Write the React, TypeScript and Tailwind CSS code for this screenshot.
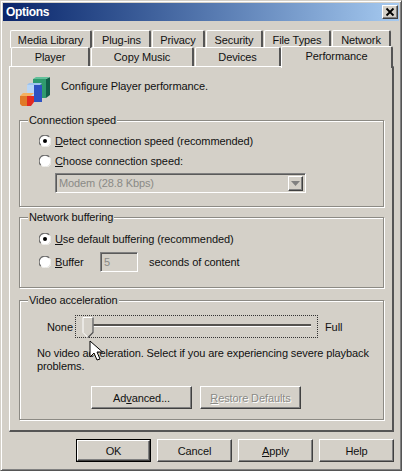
const raised = "border border-t-white border-l-white border-r-[#404040] border-b-[#404040] shadow-[inset_-1px_-1px_0_#808080]"
const sunken = "border border-t-[#808080] border-l-[#808080] border-r-white border-b-white shadow-[inset_1px_1px_0_#5a5a5a]"

function BackTab({ label, width }: { label: string; width: string }) {
  return (
    <div className={`${width} h-[18px] shrink-0 flex items-center justify-center rounded-t-[2px] border-t border-l border-white border-r-2 border-r-[#555] pt-px`}>
      {label}
    </div>
  )
}

function Radio({ checked }: { checked?: boolean }) {
  return (
    <svg width="12" height="12" viewBox="0 0 12 12" className="shrink-0">
      <circle cx="6" cy="6" r="5.5" fill="#fff" />
      <path d="M1.8 10.2A5.8 5.8 0 0 1 10.2 1.8" fill="none" stroke="#6e6e6e" strokeWidth="1.2" />
      <path d="M10.5 2.5A5.6 5.6 0 0 1 2.5 10.5" fill="none" stroke="#f4f4f2" strokeWidth="1" />
      {checked && <circle cx="6" cy="6" r="2" fill="#000" />}
    </svg>
  )
}

function GroupBox({ title, className, children }: { title: string; className: string; children: React.ReactNode }) {
  return (
    <div className={`relative border border-[#8c8a84] shadow-[1px_1px_0_#fff,inset_1px_1px_0_#fff] ${className}`}>
      <span className="absolute left-[8px] -top-[9px] bg-[#d4d0c8] px-[1px] leading-[16px]">{title}</span>
      {children}
    </div>
  )
}

function Button({ className, children }: { className: string; children: React.ReactNode }) {
  return <div className={`${raised} h-[23px] flex items-center justify-center ${className}`}>{children}</div>
}

function PlayerIcon() {
  return (
    <svg width="32" height="34" viewBox="0 0 32 34" className="shrink-0">
      <path d="M14 3h13v19H14z" fill="#2f9a6e" />
      <path d="M27 3l4-2v18l-4 3z" fill="#125f4a" />
      <path d="M14 3l3-2h14l-4 2z" fill="#62c09a" />
      <path d="M8 9h7v15H8z" fill="#b9d6f6" />
      <path d="M8 9l2-2h13l-2 2z" fill="#9fc4ee" />
      <path d="M15 9h8v17h-8z" fill="#2e52c2" />
      <path d="M1 20l3-3h11l-3 3z" fill="#f5b060" />
      <path d="M1 20h7v10H3l-2-2z" fill="#e07a28" />
      <path d="M8 20h7v6l-3 4H8z" fill="#e22a22" />
    </svg>
  )
}

export default function App() {
  return (
    <div className="w-[402px] h-[471px] overflow-hidden bg-[#d4d0c8] p-[2px] border border-t-[#d4d0c8] border-l-[#d4d0c8] border-r-[#555] border-b-[#555] shadow-[inset_1px_1px_0_#fff,inset_-1px_-1px_0_#808080] text-[11px] tracking-[-0.1px] leading-[14px] text-[#111] font-['Liberation_Sans',Arial,sans-serif]">
      <div className="h-[18px] flex items-center justify-between pl-[3px] pr-[1px] bg-gradient-to-r from-[#0a246a] to-[#a6caf0]">
        <span className="font-bold text-white text-[12px] tracking-[-0.3px]">Options</span>
        <div className={`${raised} w-[16px] h-[14px] flex items-center justify-center bg-[#d4d0c8]`}>
          <svg width="10" height="10" viewBox="0 0 10 10">
            <path d="M1.5 1.5l7 7M8.5 1.5l-7 7" stroke="#000" strokeWidth="1.8" />
          </svg>
        </div>
      </div>

      <div className="pl-[6px] pr-[6px] pt-[9px]">
        <div className="flex pl-[1px] gap-[1px] h-[17px]">
          <BackTab label="Media Library" width="w-[82px]" />
          <BackTab label="Plug-ins" width="w-[58px]" />
          <BackTab label="Privacy" width="w-[53px]" />
          <BackTab label="Security" width="w-[57px]" />
          <BackTab label="File Types" width="w-[67px]" />
          <BackTab label="Network" width="w-[59px]" />
        </div>
        <div className="relative flex pl-[2px] gap-[1px] h-[19px]">
          <div className="w-[79px] h-[19px] flex items-center justify-center rounded-t-[2px] border-t border-l border-white border-r-2 border-r-[#555]">Player</div>
          <div className="w-[103px] h-[19px] flex items-center justify-center rounded-t-[2px] border-t border-l border-white border-r-2 border-r-[#555]">Copy Music</div>
          <div className="w-[86px] h-[19px] flex items-center justify-center rounded-t-[2px] border-t border-l border-white border-r-2 border-r-[#555]">Devices</div>
          <div className="relative z-10 -ml-[1px] w-[112px] h-[22px] -mt-[1px] pb-[4px] flex items-center justify-center bg-[#d4d0c8] rounded-t-[2px] border-t border-l border-white border-r-2 border-r-[#555]">Performance</div>
        </div>

        <div className="w-[385px] h-[366px] pl-[9px] pr-[8px] border border-t-white border-l-white border-r-2 border-r-[#555] border-b-2 border-b-[#555]">
          <div className="h-[53px] pt-[9px] flex items-start">
            <PlayerIcon />
            <span className="ml-[10px] mt-[3px]">Configure Player performance.</span>
          </div>

          <GroupBox title="Connection speed" className="h-[87px] pl-[19px] pt-[13px]">
            <div className="flex items-center gap-[4px] h-[14px]">
              <Radio checked />
              <span><u>D</u>etect connection speed (recommended)</span>
            </div>
            <div className="flex items-center gap-[4px] h-[14px] mt-[6px]">
              <Radio />
              <span><u>C</u>hoose connection speed:</span>
            </div>
            <div className={`${sunken} w-[251px] h-[20px] ml-[16px] mt-[5px] flex items-center justify-between pl-[3px] pr-[2px] text-[#8a8a86]`}>
              <span>Modem (28.8 Kbps)</span>
              <div className={`${raised} w-[15px] h-[15px] flex items-center justify-center`}>
                <svg width="9" height="5" viewBox="0 0 9 5"><path d="M0 0h9L4.500 5z" fill="#808080" /></svg>
              </div>
            </div>
          </GroupBox>

          <GroupBox title="Network buffering" className="h-[71px] mt-[10px] pl-[19px] pt-[14px]">
            <div className="flex items-center gap-[4px] h-[14px]">
              <Radio checked />
              <span><u>U</u>se default buffering (recommended)</span>
            </div>
            <div className="flex items-center h-[20px] mt-[6px]">
              <Radio />
              <span className="ml-[4px] w-[45px]"><u>B</u>uffer</span>
              <div className={`${sunken} w-[38px] h-[20px] flex items-center pl-[3px] text-[#8a8a86]`}>5</div>
              <span className="ml-[11px]">seconds of content</span>
            </div>
          </GroupBox>

          <GroupBox title="Video acceleration" className="h-[120px] mt-[12px] pl-[17px] pt-[14px]">
            <div className="flex items-center h-[23px] pl-[10px]">
              <span className="w-[28px]">None</span>
              <div className="relative w-[243px] h-[23px] border border-dotted border-[#333]">
                <div className="absolute left-[9px] right-[6px] top-[8px] h-[3px] border-t-2 border-t-[#55534f] border-b border-b-white" />
                <svg width="12" height="21" viewBox="0 0 12 21" className="absolute left-[6px] top-[1px]">
                  <path d="M1 0.500h10v15l-5 5-5-5z" fill="#d4d0c8" stroke="#fff" />
                  <path d="M11 0.500v15l-5 5" fill="none" stroke="#4a4a4a" strokeWidth="1.2" />
                </svg>
              </div>
              <span className="ml-[7px]">Full</span>
            </div>
            <p className="mt-[9px] w-[340px] leading-[13px]">
              No video acceleration. Select if you are experiencing severe playback problems.
            </p>
            <div className="flex gap-[8px] mt-[13px] ml-[54px]">
              <Button className="w-[101px]">Ad<u>v</u>anced...</Button>
              <Button className="w-[101px] text-[#8a8a86] [text-shadow:1px_1px_0_#fff]"><span><u>R</u>estore Defaults</span></Button>
            </div>
            <svg width="14" height="22" viewBox="0 0 14 22" className="absolute left-[69px] top-[39px]">
              <path d="M1 1v16l4-4 3 7 3-1-3-7h5.500z" fill="#fff" stroke="#000" />
            </svg>
          </GroupBox>
        </div>

        <div className="flex justify-end gap-[6px] mt-[7px] -mr-[1px]">
          <div className="w-[75px] h-[23px] border border-black">
            <Button className="w-full !h-full">OK</Button>
          </div>
          <Button className="w-[75px]">Cancel</Button>
          <Button className="w-[75px]"><span><u>A</u>pply</span></Button>
          <Button className="w-[75px]">Help</Button>
        </div>
      </div>
    </div>
  )
}
